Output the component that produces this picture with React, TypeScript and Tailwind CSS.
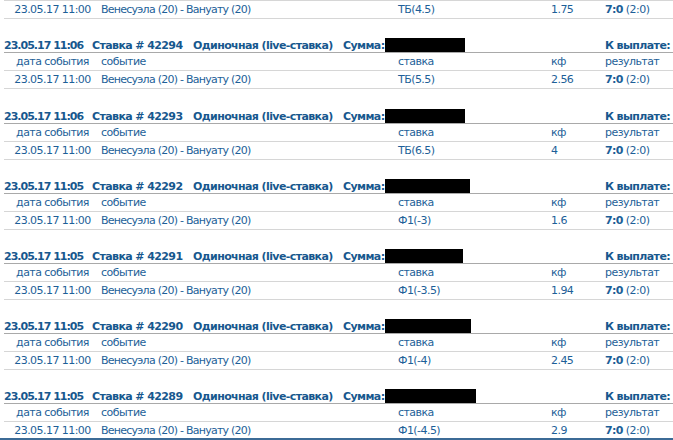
import React from "react";

const bets = [
  { time: "11:06", id: "42294", bet: "ТБ(5.5)", kf: "2.56", box: 80, extra: 0 },
  { time: "11:06", id: "42293", bet: "ТБ(6.5)", kf: "4", box: 80, extra: 1 },
  { time: "11:05", id: "42292", bet: "Ф1(-3)", kf: "1.6", box: 85, extra: 0 },
  { time: "11:05", id: "42291", bet: "Ф1(-3.5)", kf: "1.94", box: 78, extra: 0 },
  { time: "11:05", id: "42290", bet: "Ф1(-4)", kf: "2.45", box: 86, extra: 0 },
  { time: "11:05", id: "42289", bet: "Ф1(-4.5)", kf: "2.9", box: 91, extra: 0 },
];

const grid = "grid grid-cols-[97px_297px_153px_54px_1fr]";

function DataRow({ bet, kf }: { bet: string; kf: string }) {
  return (
    <div className={`${grid} h-[18px] items-center border-b border-[#d6d6d6] text-[#1d5f98] tracking-[-0.55px]`}>
      <div className="text-center">23.05.17 11:00</div>
      <div className="tracking-[-0.75px]">Венесуэла (20) - Вануату (20)</div>
      <div>{bet}</div>
      <div>{kf}</div>
      <div>
        <span className="font-bold tracking-[-0.6px]">7:0</span> (2:0)
      </div>
    </div>
  );
}

function Block({ b }: { b: (typeof bets)[number] }) {
  return (
    <div className={b.extra ? "pt-[16px]" : "pt-[15px]"}>
      <div className={`${grid} h-[19px] items-end border-b border-[#a9a9a9] font-bold text-[#17588e] tracking-[-0.6px]`}>
        <div className="col-span-4 flex items-end">
          <span className="w-[88px] shrink-0 whitespace-nowrap tracking-[-1px]">23.05.17 {b.time}</span>
          <span className="w-[101px] shrink-0 whitespace-nowrap">Ставка # {b.id}</span>
          <span className="w-[150px] shrink-0 whitespace-nowrap">Одиночная (live-ставка)</span>
          <span className="w-[42px] shrink-0 whitespace-nowrap">Сумма:</span>
          <span className="block h-[14px] bg-black" style={{ width: b.box }} />
        </div>
        <div className="whitespace-nowrap">К выплате:</div>
      </div>
      <div className={`${grid} h-[18px] items-center border-b border-[#d6d6d6] text-[#1d5f98] tracking-[-0.55px]`}>
        <div className="text-center">дата события</div>
        <div>событие</div>
        <div>ставка</div>
        <div>кф</div>
        <div>результат</div>
      </div>
      <DataRow bet={b.bet} kf={b.kf} />
    </div>
  );
}

export default function App() {
  return (
    <div
      className="relative h-[440px] w-[673px] overflow-hidden bg-white text-[11px] leading-[13px]"
      style={{ fontFamily: '"DejaVu Sans", Verdana, sans-serif' }}
    >
      <div className="pl-[4px]">
        <div className="border-t border-[#d6d6d6]">
          <DataRow bet="ТБ(4.5)" kf="1.75" />
        </div>
        {bets.map((b) => (
          <Block key={b.id} b={b} />
        ))}
      </div>
      <div className="absolute bottom-0 left-0 h-[2px] w-full bg-[#3c6b96]" />
    </div>
  );
}
